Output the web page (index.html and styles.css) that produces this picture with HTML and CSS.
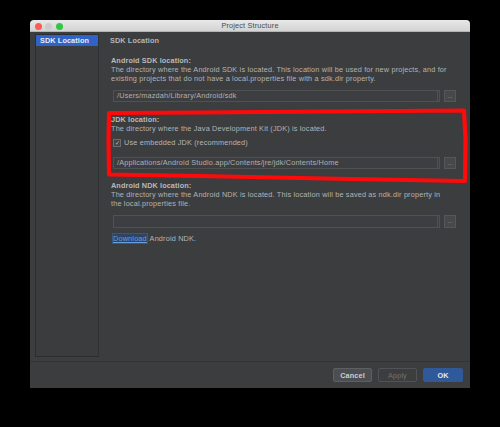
FILE: index.html
```html
<!DOCTYPE html>
<html>
<head>
<meta charset="utf-8">
<link rel="stylesheet" href="styles.css">
</head>
<body>
<div class="screen">
  <div class="window">
    <div class="titlebar">
      <div class="lights">
        <span class="light red"></span>
        <span class="light gray"></span>
        <span class="light green"></span>
      </div>
      <div class="title">Project Structure</div>
      <div></div>
    </div>
    <div class="body">
      <div class="main">
        <div class="sidebar">
          <div class="nav-item active">SDK Location</div>
        </div>
        <div class="content">
          <div class="page-title">SDK Location</div>

          <div class="section sdk">
            <div class="label">Android SDK location:</div>
            <div class="desc">The directory where the Android SDK is located. This location will be used for new projects, and for existing projects that do not have a local.properties file with a sdk.dir property.</div>
            <div class="field-row">
              <div class="field">/Users/mazdah/Library/Android/sdk</div>
              <div class="browse">...</div>
            </div>
          </div>

          <div class="section jdk">
            <div class="label">JDK location:</div>
            <div class="desc">The directory where the Java Development Kit (JDK) is located.</div>
            <div class="check-row">
              <span class="checkbox">✓</span>
              <span>Use embedded JDK (recommended)</span>
            </div>
            <div class="field-row jdk-field">
              <div class="field">/Applications/Android Studio.app/Contents/jre/jdk/Contents/Home</div>
              <div class="browse">...</div>
            </div>
          </div>

          <div class="section ndk">
            <div class="label">Android NDK location:</div>
            <div class="desc">The directory where the Android NDK is located. This location will be saved as ndk.dir property in the local.properties file.</div>
            <div class="field-row ndk-field">
              <div class="field"></div>
              <div class="browse">...</div>
            </div>
            <div class="download"><span class="link">Download</span> Android NDK.</div>
          </div>
        </div>
      </div>
      <div class="footer">
        <button class="btn cancel">Cancel</button>
        <button class="btn apply">Apply</button>
        <button class="btn ok">OK</button>
      </div>
    </div>
  </div>
  <svg class="annotation" width="500" height="427" viewBox="0 0 500 427">
    <path d="M109,113 L200,112.5 L330,111.5 L464,110.5 L465.5,140 L465,181 L350,179 L200,176 L109,174.5 L108.5,140 Z" fill="none" stroke="#ff0a0a" stroke-width="4.2" stroke-linejoin="round"/>
  </svg>
</div>
</body>
</html>
```

FILE: styles.css
```css
* { box-sizing: border-box; }
html, body {
  margin: 0;
  padding: 0;
  background: #000;
}
body {
  width: 500px;
  height: 427px;
  overflow: hidden;
  font-family: "Liberation Sans", Arial, sans-serif;
  font-size: 7.3px;
  letter-spacing: 0.17px;
  line-height: 9px;
  color: #bbbbbb;
}
.screen {
  position: relative;
  width: 500px;
  height: 427px;
  padding-top: 20px;
  padding-left: 30px;
}
.window {
  width: 440px;
  height: 368px;
  border-radius: 4px 4px 0 0;
  overflow: hidden;
  display: flex;
  flex-direction: column;
  background: #3c3d3f;
}
.titlebar {
  height: 12px;
  display: grid;
  grid-template-columns: 1fr auto 1fr;
  align-items: center;
  background: linear-gradient(#e8e8e8, #d3d3d3);
  border-bottom: 1px solid #b5b5b5;
}
.lights {
  display: flex;
  gap: 3.5px;
  padding-left: 4.5px;
}
.light {
  width: 7px;
  height: 7px;
  border-radius: 50%;
}
.light.red { background: #fc5c55; }
.light.gray { background: #cbcbcb; }
.light.green { background: #2fc845; }
.title {
  color: #4a4a4a;
  line-height: 12px;
}
.body {
  flex: 1;
  display: flex;
  flex-direction: column;
}
.main {
  flex: 1;
  display: flex;
  padding: 2px 14px 4px 5px;
}
.sidebar {
  width: 64px;
  border: 1px solid #2c2d2f;
  border-right-color: #303133;
  background: #3b3c3e;
}
.nav-item {
  height: 11px;
  line-height: 11px;
  padding-left: 4px;
  font-weight: bold;
  letter-spacing: 0.1px;
  color: #e8edf5;
}
.nav-item.active {
  background: #2f63c8;
}
.content {
  flex: 1;
  margin-left: 10px;
  padding-top: 2px;
}
.page-title {
  font-weight: bold;
  letter-spacing: 0.1px;
  color: #b6b6b6;
  padding-left: 1px;
}
.section {
  padding-left: 2px;
}
.label {
  font-weight: bold;
  letter-spacing: 0.1px;
  color: #b9b9b9;
}
.desc {
  color: #b3b3b3;
  padding-right: 6px;
}
.sdk { margin-top: 11px; }
.jdk { margin-top: 13px; }
.ndk { margin-top: 12px; }
.field-row {
  display: flex;
  gap: 4px;
  margin-top: 7px;
  margin-left: 2px;
  height: 12px;
}
.jdk-field { margin-top: 10px; }
.ndk-field { margin-top: 7px; height: 13px; }
.field {
  position: relative;
  flex: 1;
  border: 1px solid #4f5153;
  background: #3d3e41;
  color: #b0b0b0;
  padding-left: 3px;
  line-height: 10px;
  white-space: nowrap;
  overflow: hidden;
}
.field::after {
  content: "";
  position: absolute;
  right: 1px;
  top: 0;
  bottom: 0;
  width: 1px;
  background: #4f5153;
}
.browse {
  width: 12px;
  border: 1px solid #55575a;
  background: #46484a;
  color: #b0b0b0;
  font-size: 6px;
  letter-spacing: 0;
  line-height: 10px;
  text-align: center;
}
.check-row {
  display: flex;
  align-items: center;
  gap: 3px;
  margin-top: 5px;
  margin-left: 2px;
  color: #b5b5b5;
}
.checkbox {
  width: 8px;
  height: 8px;
  border: 1px solid #6a6c6e;
  background: #434547;
  color: #c0c0c0;
  font-size: 6px;
  letter-spacing: 0;
  line-height: 6px;
  text-align: center;
}
.download {
  margin-top: 6px;
  margin-left: 2px;
  color: #b5b5b5;
}
.link {
  color: #6a9fde;
  text-decoration: underline;
  background: #2c4466;
  outline: 1px solid #34568a;
  margin-right: 1px;
}
.footer {
  height: 27px;
  border-top: 1px solid #333436;
  display: flex;
  justify-content: flex-end;
  gap: 6px;
  padding: 6px 7px 0 0;
}
.btn {
  width: 39px;
  height: 14px;
  font-family: "Liberation Sans", Arial, sans-serif;
  font-size: 7.3px;
  letter-spacing: 0.1px;
  padding: 0;
  border-radius: 2px;
}
.cancel {
  background: #4c4e51;
  border: 1px solid #5d5f62;
  color: #cfcfcf;
  font-weight: bold;
}
.apply {
  background: transparent;
  border: 1px solid #505255;
  color: #6f7173;
}
.ok {
  width: 40px;
  background: #30599a;
  border: 1px solid #30599a;
  color: #e4e9f2;
  font-weight: bold;
}
.annotation {
  position: absolute;
  left: 0;
  top: 0;
  pointer-events: none;
}
```
